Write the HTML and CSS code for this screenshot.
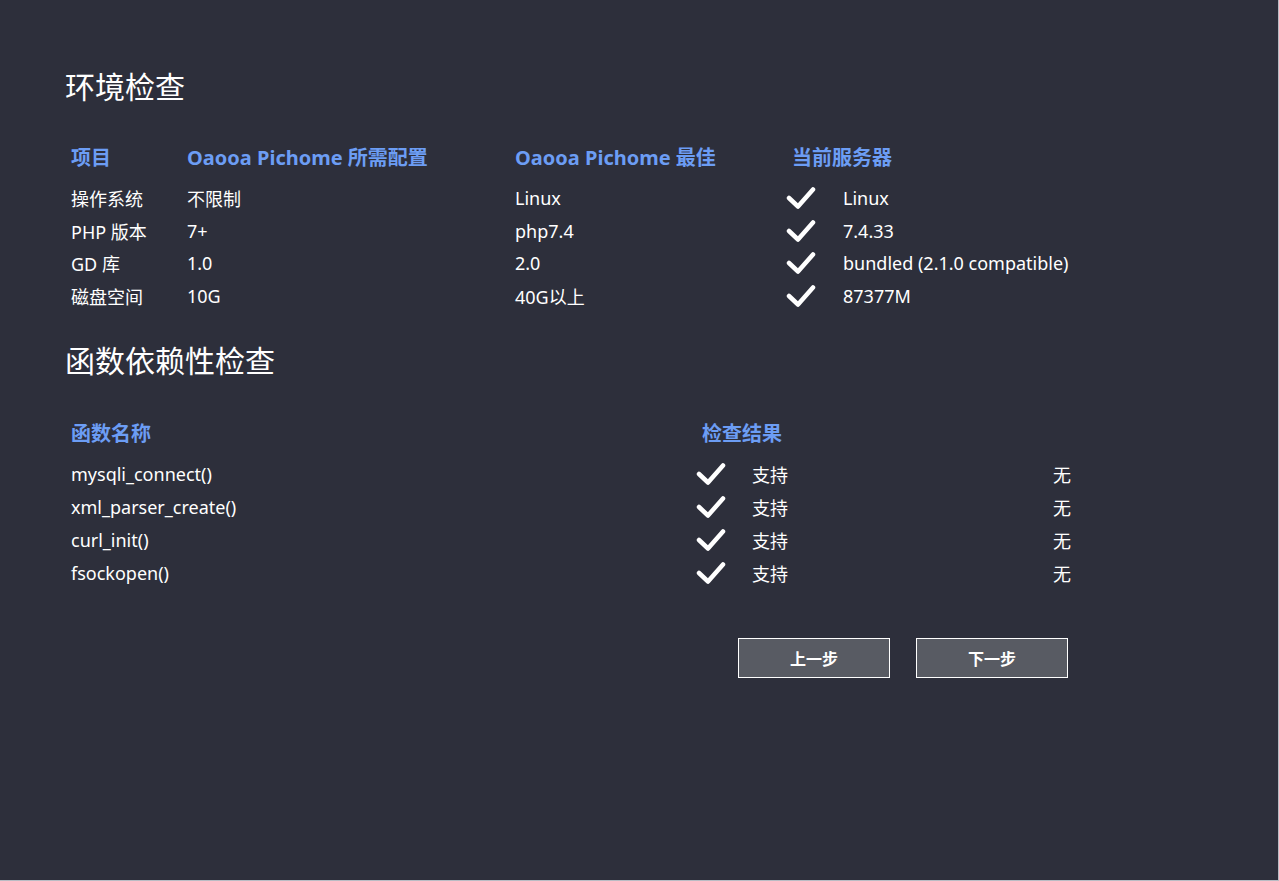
FILE: index.html
```html
<!DOCTYPE html>
<html lang="zh-CN">
<head>
    <meta charset="UTF-8">
    <meta name="viewport" content="width=device-width, initial-scale=1.0">
    <title>环境检查</title>
    <link rel="stylesheet" href="styles.css">
</head>
<body>
    <div class="page">
        <h2 class="section-title">环境检查</h2>
        <div class="env-table">
            <div class="th">项目</div>
            <div class="th">Oaooa Pichome 所需配置</div>
            <div class="th">Oaooa Pichome 最佳</div>
            <div class="th th-server">当前服务器</div>

            <div>操作系统</div>
            <div>不限制</div>
            <div>Linux</div>
            <div class="ok"><svg viewBox="0 0 30 24"><polyline points="3,12 12,20.5 27,3.5"/></svg></div>
            <div>Linux</div>

            <div>PHP 版本</div>
            <div>7+</div>
            <div>php7.4</div>
            <div class="ok"><svg viewBox="0 0 30 24"><polyline points="3,12 12,20.5 27,3.5"/></svg></div>
            <div>7.4.33</div>

            <div>GD 库</div>
            <div>1.0</div>
            <div>2.0</div>
            <div class="ok"><svg viewBox="0 0 30 24"><polyline points="3,12 12,20.5 27,3.5"/></svg></div>
            <div>bundled (2.1.0 compatible)</div>

            <div>磁盘空间</div>
            <div>10G</div>
            <div>40G以上</div>
            <div class="ok"><svg viewBox="0 0 30 24"><polyline points="3,12 12,20.5 27,3.5"/></svg></div>
            <div>87377M</div>
        </div>

        <h2 class="section-title second">函数依赖性检查</h2>
        <div class="func-table">
            <div class="th">函数名称</div>
            <div class="th th-result">检查结果</div>

            <div>mysqli_connect()</div>
            <div class="ok"><svg viewBox="0 0 30 24"><polyline points="3,12 12,20.5 27,3.5"/></svg></div>
            <div>支持</div>
            <div>无</div>

            <div>xml_parser_create()</div>
            <div class="ok"><svg viewBox="0 0 30 24"><polyline points="3,12 12,20.5 27,3.5"/></svg></div>
            <div>支持</div>
            <div>无</div>

            <div>curl_init()</div>
            <div class="ok"><svg viewBox="0 0 30 24"><polyline points="3,12 12,20.5 27,3.5"/></svg></div>
            <div>支持</div>
            <div>无</div>

            <div>fsockopen()</div>
            <div class="ok"><svg viewBox="0 0 30 24"><polyline points="3,12 12,20.5 27,3.5"/></svg></div>
            <div>支持</div>
            <div>无</div>
        </div>

        <div class="actions">
            <button class="btn">上一步</button>
            <button class="btn">下一步</button>
        </div>
    </div>
</body>
</html>
```

FILE: styles.css
```css
html, body {
    margin: 0;
    padding: 0;
    height: 100%;
}

body {
    background-color: #2d2f3b;
    color: #ffffff;
    font-family: "Noto Sans", "Noto Sans CJK SC", sans-serif;
    font-size: 18px;
}

.page {
    box-sizing: border-box;
    height: 100%;
    padding: 67px 0 0 65px;
    border-right: 1px solid #b9bcc4;
    border-bottom: 1px solid #b9bcc4;
}

.section-title {
    margin: 0;
    height: 40px;
    line-height: 40px;
    font-size: 30px;
    font-weight: normal;
}

.section-title.second {
    margin-top: 29px;
}

/* two tables share the same row rhythm */
.env-table,
.func-table {
    display: grid;
    grid-template-rows: 40.7px;
    grid-auto-rows: 32.7px;
    align-items: center;
    margin-left: 6px;
    white-space: nowrap;
}

.env-table {
    margin-top: 34px;
    grid-template-columns: 116px 328px 271px 57px auto;
}

.func-table {
    margin-top: 36px;
    grid-template-columns: 625px 56px 301px auto;
}

.th {
    grid-row: 1;
    align-self: start;
    color: #6c9df4;
    font-size: 20px;
    font-weight: bold;
    line-height: 34px;
}

.th-server {
    grid-column: 4 / span 2;
    padding-left: 6px;
}

.th-result {
    grid-column: 2 / span 3;
    padding-left: 6px;
}

.ok {
    display: flex;
    align-items: center;
}

.ok svg {
    width: 30px;
    height: 24px;
    fill: none;
    stroke: #ffffff;
    stroke-width: 4.5;
    stroke-linecap: round;
    stroke-linejoin: round;
}

.actions {
    display: flex;
    gap: 26px;
    margin: 49px 0 0 673px;
}

.btn {
    width: 152px;
    height: 40px;
    background-color: #585b63;
    border: 1px solid #ffffff;
    color: #ffffff;
    font-family: "Noto Sans CJK SC", sans-serif;
    font-size: 16px;
    font-weight: bold;
    cursor: pointer;
}
```
